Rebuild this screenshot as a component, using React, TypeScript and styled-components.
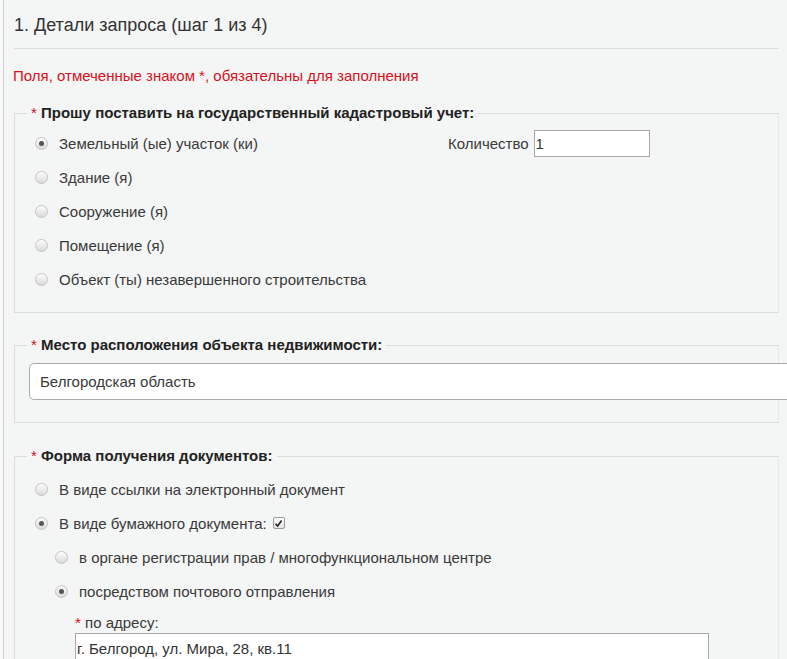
import styled, { createGlobalStyle } from "styled-components";

const GlobalStyle = createGlobalStyle`
  body {
    margin: 0;
    background: #f9f9f9;
    font-family: "Liberation Sans", Arial, sans-serif;
    color: #333;
  }
`;

const placeOptions = [
  "Земельный (ые) участок (ки)",
  "Здание (я)",
  "Сооружение (я)",
  "Помещение (я)",
  "Объект (ты) незавершенного строительства",
];

export default function App() {
  return (
    <>
      <GlobalStyle />
      <Panel>
        <Title>1. Детали запроса (шаг 1 из 4)</Title>
        <Divider />
        <Note>Поля, отмеченные знаком *, обязательны для заполнения</Note>

        <Group $gap={19} $bottom={16}>
          <Legend>
            <Star>*</Star> Прошу поставить на государственный кадастровый учет:
          </Legend>
          <Options $top={4}>
            {placeOptions.map((label, i) =>
              i === 0 ? (
                <SplitRow key={label}>
                  <Option>
                    <Radio $checked />
                    <span>{label}</span>
                  </Option>
                  <Quantity>
                    Количество <SmallInput defaultValue="1" />
                  </Quantity>
                </SplitRow>
              ) : (
                <Row key={label}>
                  <Option>
                    <Radio />
                    <span>{label}</span>
                  </Option>
                </Row>
              )
            )}
          </Options>
        </Group>

        <Group $gap={23} $bottom={15}>
          <Legend>
            <Star>*</Star> Место расположения объекта недвижимости:
          </Legend>
          <Select>Белгородская область</Select>
        </Group>

        <Group $gap={24} $bottom={0}>
          <Legend>
            <Star>*</Star> Форма получения документов:
          </Legend>
          <Options $top={7}>
            <Row>
              <Option>
                <Radio />
                <span>В виде ссылки на электронный документ</span>
              </Option>
            </Row>
            <Row>
              <Option>
                <Radio $checked />
                <span>В виде бумажного документа:</span>
                <Check>
                  <svg width="9" height="9" viewBox="0 0 9 9">
                    <path d="M1.5 4.8 L3.6 7 L7.6 1.6" fill="none" stroke="#222" strokeWidth="1.6" />
                  </svg>
                </Check>
              </Option>
            </Row>
            <Row $indent>
              <Option>
                <Radio />
                <span>в органе регистрации прав / многофункциональном центре</span>
              </Option>
            </Row>
            <Row $indent>
              <Option>
                <Radio $checked />
                <span>посредством почтового отправления</span>
              </Option>
            </Row>
          </Options>
          <Address>
            <FieldLabel>
              <Star>*</Star> по адресу:
            </FieldLabel>
            <WideInput defaultValue="г. Белгород, ул. Мира, 28, кв.11" />
          </Address>
        </Group>
      </Panel>
    </>
  );
}

const Panel = styled.div`
  margin-left: 3px;
  width: 766px;
  min-height: 659px;
  padding: 13px 9px 0 9px;
  background: #f4f5f5;
  border-left: 1px solid #cfcfcf;
  overflow: visible;
`;

const Title = styled.h1`
  margin: 0 0 0 1px;
  font-size: 18px;
  font-weight: normal;
  line-height: 24px;
  color: #333;
`;

const Divider = styled.div`
  height: 1px;
  margin: 11px 0 0 1px;
  background: #dedede;
`;

const Note = styled.p`
  margin: 18px 0 0 0;
  font-size: 15px;
  line-height: 18px;
  color: #d8101b;
`;

const Group = styled.fieldset<{ $gap: number; $bottom: number }>`
  margin: ${(p) => p.$gap}px 0 0 1px;
  padding: 0 12px ${(p) => p.$bottom}px 12px;
  border: 1px solid #dcdcdc;
  border-right-color: #e8e8e8;
  min-width: 0;
  overflow: visible;
`;

const Legend = styled.legend`
  padding: 0 4px;
  font-size: 15px;
  font-weight: bold;
  line-height: 18px;
  color: #222;
`;

const Star = styled.span`
  color: #d8101b;
  font-weight: normal;
`;

const Options = styled.div<{ $top: number }>`
  padding-top: ${(p) => p.$top}px;
`;

const Row = styled.div<{ $indent?: boolean }>`
  display: flex;
  align-items: center;
  height: 34px;
  padding-left: ${(p) => (p.$indent ? 28 : 8)}px;
`;

const SplitRow = styled.div`
  display: grid;
  grid-template-columns: 413px auto;
  align-items: center;
  height: 34px;
  padding-left: 8px;
`;

const Option = styled.label`
  display: flex;
  align-items: center;
  gap: 11px;
  font-size: 15px;
  color: #3a3a3a;
`;

const Radio = styled.span<{ $checked?: boolean }>`
  position: relative;
  flex: none;
  width: 11px;
  height: 11px;
  border-radius: 50%;
  border: 1px solid #c4c4c4;
  background: linear-gradient(#fdfdfd, #d9d9d9);
  &::after {
    content: "";
    display: ${(p) => (p.$checked ? "block" : "none")};
    position: absolute;
    left: 3px;
    top: 3px;
    width: 5px;
    height: 5px;
    border-radius: 50%;
    background: #555;
  }
`;

const Check = styled.span`
  display: flex;
  align-items: center;
  justify-content: center;
  width: 10px;
  height: 10px;
  margin-left: -5px;
  border: 1px solid #9a9a9a;
  border-radius: 2px;
  background: linear-gradient(#fff, #e2e2e2);
`;

const Quantity = styled.label`
  display: flex;
  align-items: center;
  gap: 5px;
  font-size: 15px;
  color: #3a3a3a;
`;

const SmallInput = styled.input`
  box-sizing: border-box;
  width: 116px;
  height: 27px;
  padding: 0 1px;
  border: 1px solid #a9a9a9;
  background: #fff;
  font-family: "Liberation Sans", Arial, sans-serif;
  font-size: 15px;
  color: #333;
  outline: none;
`;

const Select = styled.div`
  box-sizing: border-box;
  width: 790px;
  height: 37px;
  margin: 9px 0 7px 2px;
  padding: 0 10px;
  display: flex;
  align-items: center;
  border: 1px solid #aaa;
  border-radius: 5px 0 0 5px;
  background: #fff;
  font-size: 15px;
  color: #3a3a3a;
`;

const Address = styled.div`
  padding: 6px 0 0 48px;
`;

const FieldLabel = styled.div`
  font-size: 15px;
  line-height: 18px;
  color: #3a3a3a;
`;

const WideInput = styled.input`
  box-sizing: border-box;
  display: block;
  width: 634px;
  height: 30px;
  margin-top: 1px;
  padding: 0 1px;
  border: 1px solid #a9a9a9;
  background: #fff;
  font-family: "Liberation Sans", Arial, sans-serif;
  font-size: 15px;
  color: #333;
  outline: none;
`;
